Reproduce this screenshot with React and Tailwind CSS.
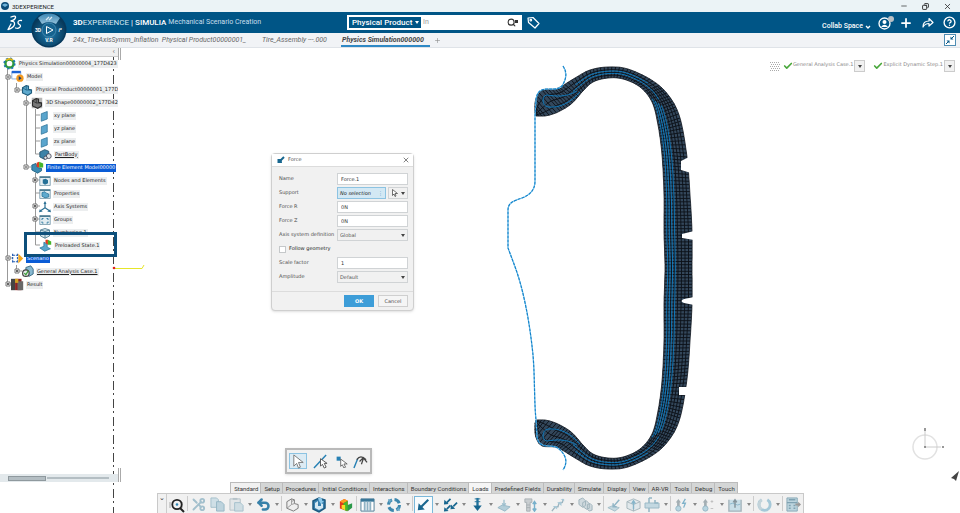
import React from "react";
import { Scissors, Undo2, Search, X, Minus, Copy, Plus, Check, CircleHelp } from "lucide-react";

/* ---------- tyre cross-section mesh ---------- */

const half = [
  [[535, 112], [536, 116]],
  [[535, 103], [545, 116]],
  [[537, 96], [553, 114]],
  [[542, 90], [560, 111]],
  [[555, 89], [570, 105]],
  [[562, 86], [577, 98]],
  [[575, 78], [583, 91]],
  [[590, 70], [593, 82]],
  [[608, 67], [608, 78]],
  [[628, 69], [623, 79]],
  [[653, 81], [640, 87]],
  [[669, 96], [652, 102]],
  [[680, 118], [658, 125]],
  [[687, 157], [662, 155]],
  [[690, 195], [664, 195]],
  [[692, 232], [664, 232]],
];
const mirror = ([x, y]) => [x, 536 - y];
const stations = [
  ...half,
  [[692, 268], [665, 268]],
  ...[...half].reverse().map(([o, i]) => [mirror(o), mirror(i)]),
];

function spline(a, b, c, d, t) {
  return [0, 1].map(
    (k) =>
      0.5 *
      (2 * b[k] +
        (c[k] - a[k]) * t +
        (2 * a[k] - 5 * b[k] + 4 * c[k] - d[k]) * t * t +
        (3 * b[k] - a[k] - 3 * c[k] + d[k]) * t * t * t)
  );
}

const ribs = [];
for (let s = 0; s < stations.length - 1; s++) {
  const at = (n, side) => stations[Math.max(0, Math.min(stations.length - 1, n))][side];
  const [o1, i1] = stations[s];
  const [o2, i2] = stations[s + 1];
  const len = (Math.hypot(o2[0] - o1[0], o2[1] - o1[1]) + Math.hypot(i2[0] - i1[0], i2[1] - i1[1])) / 2;
  const steps = Math.max(2, Math.round(len / 3.4));
  for (let n = 0; n < steps; n++) {
    const t = n / steps;
    ribs.push([
      spline(at(s - 1, 0), at(s, 0), at(s + 1, 0), at(s + 2, 0), t),
      spline(at(s - 1, 1), at(s, 1), at(s + 1, 1), at(s + 2, 1), t),
    ]);
  }
}
ribs.push(stations[stations.length - 1]);

const pt = (p) => p[0].toFixed(1) + " " + p[1].toFixed(1);
const layer = (f, from = 0, to = ribs.length) =>
  "M" +
  ribs
    .slice(from, to)
    .map(([o, i]) => pt([i[0] + (o[0] - i[0]) * f, i[1] + (o[1] - i[1]) * f]))
    .join("L");
const body =
  "M" + ribs.map((r) => pt(r[0])).join("L") + "L" + [...ribs].reverse().map((r) => pt(r[1])).join("L") + "Z";
const cross = ribs.map(([o, i]) => "M" + pt(o) + "L" + pt(i)).join("");
const firstAt = (x) => ribs.findIndex(([, i]) => i[0] > x);
const beltFrom = firstAt(650);
const wallFrom = firstAt(577);
const grid =
  [0.24, 0.48, 0.74].map((f) => layer(f)).join("") +
  [0.12, 0.36, 0.61, 0.87].map((f) => layer(f, beltFrom - 3, ribs.length - beltFrom + 3)).join("");
const belts = [0.1, 0.19, 0.28, 0.38]
  .map((f, n) => layer(f, beltFrom + n, ribs.length - beltFrom - n))
  .join("");
const plies = layer(0.4, wallFrom, beltFrom + 2) + layer(0.62, wallFrom + 2, beltFrom - 4);
const pliesLow =
  layer(0.4, ribs.length - beltFrom - 2, ribs.length - wallFrom) +
  layer(0.62, ribs.length - beltFrom + 4, ribs.length - wallFrom - 2);

const rim =
  "M563 66C567 72 567 78 562 86C558 90 553 89 548 89C540 89 537 92 536 100L535 116V181C535 190 530 195 522 198C513 201 508 203 508 210V248L514 264C524 290 530 325 533 355C535 378 534 400 536 420L537 437C538 443 541 446 548 446C555 446 558 447 562 452C567 458 567 464 563 470";

function Tyre() {
  return (
    <svg className="pointer-events-none absolute left-0 top-0" width="960" height="465" viewBox="0 48 960 465" fill="none">
      <path d="M113.500 57V513" stroke="#444" strokeDasharray="9 3 2 4" />
      <path d="M114 268.500H142L144 265" stroke="#e6e62a" />
      <circle cx="114" cy="268" r="1.300" fill="#d22" />
      <path d={body} fill="#33475b" stroke="#10171f" strokeWidth="0.8" />
      <path d={cross + grid} stroke="#0b1016" strokeWidth="0.9" />
      <g stroke="#0c7fc6" strokeWidth="0.9">
        <path d={belts} />
        <path d={plies + pliesLow} />
        <path d="M577 91C565 98 555 96 547 95C541 96 542 106 548 107C560 108 570 103 580 92" />
        <path d="M577 445C565 438 555 440 547 441C541 440 542 430 548 429C560 428 570 433 580 444" />
      </g>
      <path d="M689 157L681 161V170L691 173ZM694 231L682 234V238L694 240ZM694 297L684 299Q679 301 684 303L694 305ZM690 387H679V395H688Z" fill="#fff" />
      <path d={rim} stroke="#8fd0f2" strokeWidth="1.200" />
      <path d={rim} stroke="#1583ca" strokeWidth="1.200" strokeDasharray="3 1" />
      <g stroke="#e2e2e2">
        <circle cx="925" cy="447" r="12" strokeWidth="1.500" />
        <path d="M925 431V447H941" stroke="#ccc" />
        <path d="M925 428V431M942 447H944M924 447H926" stroke="#777" strokeWidth="1.500" />
      </g>
      <path d="M951 478L959 471L956 481L954 479Z" fill="#444" />
    </svg>
  );
}

/* ---------- small drawings ---------- */

const Svg = ({ children, s = 14 }) => (
  <svg width={s} height={s} viewBox="0 0 16 16" fill="none" className="shrink-0">
    {children}
  </svg>
);

function Caret({ className = "text-[#444]" }) {
  return (
    <svg width="4" height="3" viewBox="0 0 4 3" className={"pointer-events-none shrink-0 " + className} fill="currentColor">
      <path d="M0 0H4L2 3Z" />
    </svg>
  );
}

const cube = "M2 5L7 2L10 3V7L14 8V12L9 15L2 12Z";
const icons = {
  zoom: (
    <Svg s={16}>
      <path d="M1 5V11M13 5V11" stroke="#aaa" />
      <circle cx="8" cy="7.500" r="4.700" stroke="#222" strokeWidth="1.800" />
      <path d="M11 11L15 15" stroke="#222" strokeWidth="2" />
      <circle cx="8" cy="7.500" r="1.300" fill="#2f86b5" />
    </Svg>
  ),
  cut: <Scissors size={15} strokeWidth={3} className="rotate-180 text-[#a3c0cd]" />,
  copy: (
    <Svg s={15}>
      <path d="M1 1H7L9 3V11H1Z" fill="#cfdfe6" stroke="#a4c0cc" />
      <path d="M7 5H12L15 8V15H7Z" fill="#bdd3dd" stroke="#93b5c4" />
    </Svg>
  ),
  paste: (
    <Svg s={15}>
      <path d="M1 2H12V14H1Z" fill="#e2e6e8" stroke="#b6c3c9" />
      <path d="M4 1H9V3H4Z" fill="#b6c3c9" />
      <path d="M6 6H12L15 9V15H6Z" fill="#cfdde3" stroke="#a4c0cc" />
    </Svg>
  ),
  undo: <Undo2 size={15} strokeWidth={4} className="text-[#3881a9]" />,
  part: (
    <Svg s={15}>
      <path d={cube} fill="#eee" stroke="#777" />
      <path d="M7 2V8L2 12M7 8L10 7M10 3L7 5" stroke="#999" />
    </Svg>
  ),
  partBlue: (
    <Svg s={16}>
      <path d="M2 4L8 1L14 3V11L8 15L2 12Z" fill="#377fae" stroke="#1d5a80" strokeWidth="1.500" />
      <path d="M4 6L7 4V9H10V6L12 7V11L8 13L4 11Z" fill="#d5e8f2" />
      <path d="M7 1Q12 0 11 4L13 4L10 7L8 4Z" fill="#8cc9ea" />
    </Svg>
  ),
  result: (
    <Svg>
      <path d="M1 4L6 1L10 3V15L1 12Z" fill="#e23b1d" />
      <path d="M1 4L6 1L10 3L5 6Z" fill="#ff9d21" />
      <path d="M5 6L10 3V8L15 9L9 15L5 13Z" fill="#48b929" />
      <path d="M3 8L7 8V14L3 12Z" fill="#f4de26" />
      <path d="M10 8L15 6V11L10 15Z" fill="#2b9a4a" />
    </Svg>
  ),
  table: (
    <Svg s={15}>
      <path d="M1 2H15V15H1Z" fill="#fff" stroke="#4d7c96" />
      <path d="M1 2H15V5H1Z" fill="#3a7899" />
      <path d="M5 5V15M8 5V15M11 5V15" stroke="#8fb2c4" strokeWidth="2" />
    </Svg>
  ),
  update: (
    <Svg s={16}>
      <circle cx="8" cy="8" r="5.500" stroke="#3c87ae" strokeWidth="3" strokeDasharray="6 2.600" />
      <path d="M2 2L6 3L3 6ZM14 14L10 13L13 10Z" fill="#69a9c8" />
    </Svg>
  ),
  force: (
    <Svg s={14}>
      <path d="M14 2L6 10" stroke="#17668f" strokeWidth="2.500" />
      <path d="M2 14L3 6L10 13Z" fill="#17668f" />
    </Svg>
  ),
  forces: (
    <Svg s={15}>
      <path d="M8 2L4 6M15 6L11 10M8 9L4 13" stroke="#17668f" strokeWidth="1.800" />
      <path d="M1 8L1.500 3L6 7.500ZM8 13L8.500 8L13 12.500ZM1 15.500L1.500 11L6 15Z" fill="#17668f" />
    </Svg>
  ),
  down: (
    <Svg s={15}>
      <path d="M8 1V10" stroke="#22739c" strokeWidth="2.500" />
      <path d="M3.500 9H12.500L8 15Z" fill="#17668f" />
      <path d="M5 2H11M5 5H11" stroke="#22739c" />
    </Svg>
  ),
  pressure: (
    <Svg>
      <path d="M1 11L6 8L15 10L9 15Z" fill="#b3ced9" stroke="#93b5c4" />
      <path d="M8 2V8M6 6L8 9L10 6" stroke="#9dbfce" strokeWidth="1.500" />
    </Svg>
  ),
  bolt: (
    <Svg>
      <path d="M1 1H9V5H7V15H3V5H1Z" fill="#c9ced1" stroke="#a5adb1" />
      <path d="M3 8H7M3 11H7" stroke="#a5adb1" />
      <path d="M12 5V13M10 7L12 4L14 7M10 12L12 15L14 12" stroke="#77b0cb" strokeWidth="1.600" />
    </Svg>
  ),
  steps: (
    <Svg>
      <path d="M1 15L5 10H8L9 6L13 5L14 1" stroke="#9eb4be" strokeWidth="1.500" />
      <path d="M2 9L7 9V13ZM7 5L12 4V9ZM11 1H15V4Z" fill="#a9c9d7" />
    </Svg>
  ),
  coils: (
    <Svg s={15}>
      <path d="M1 3L5 1L8 4V9L5 11L1 8ZM5 6L9 4L12 7V12L9 13L5 10ZM10 8L13 7L15 9V14L12 15L10 13Z" fill="#cfd9de" stroke="#9fb3bc" />
    </Svg>
  ),
  slide: (
    <Svg>
      <path d="M1 11L6 9L14 11L9 15Z" fill="#c4d8e0" stroke="#a0bbc7" />
      <path d="M14 2L8 9M7 6V10L11 10" stroke="#8fb4c5" strokeWidth="1.700" />
    </Svg>
  ),
  block: (
    <Svg s={15}>
      <path d="M1 5L8 2L15 5V12L8 15L1 12ZM1 5L8 8L15 5M8 8V15" fill="#e1e8eb" stroke="#a6b6bd" />
      <path d="M8 13V5M6 7L8 4L10 7" stroke="#87b5ca" strokeWidth="1.500" />
    </Svg>
  ),
  press: (
    <Svg s={16}>
      <path d="M1 6H15V11H1Z" fill="#c3d8e1" stroke="#9cbac7" />
      <path d="M5 1V6M5 11V15M11 3V6H14M5 1H8" stroke="#93b5c4" strokeWidth="1.500" />
    </Svg>
  ),
  thermo: (
    <Svg>
      <path d="M3.500 10V5H2L5 1L8 5H6.500V10Z" fill="#a3aeb3" />
      <circle cx="5" cy="12" r="3" fill="#b8d5e1" stroke="#93b5c4" />
      <path d="M13 1L10 6H13L11 11" stroke="#7fb2ca" strokeWidth="1.500" />
    </Svg>
  ),
  thermo2: (
    <Svg>
      <path d="M3.500 10V5H2L5 1L8 5H6.500V10Z" fill="#a3aeb3" />
      <circle cx="5" cy="12" r="3" fill="#b8d5e1" stroke="#93b5c4" />
      <path d="M11 4H14M12.500 2.500V5.500M11 12H14" stroke="#bbb" />
    </Svg>
  ),
  bath: (
    <Svg>
      <path d="M1 2V15H15V2" fill="#c9dfe8" stroke="#a4b3ba" strokeWidth="1.500" />
      <path d="M2 7Q5 5 8 7T14 7" stroke="#86b4c9" />
      <path d="M8 11V3M6 5L8 2L10 5" stroke="#85959c" strokeWidth="1.700" />
    </Svg>
  ),
  ring: (
    <Svg s={15}>
      <path d="M11 3A6 6 0 1 1 5 3" stroke="#a5c8d8" strokeWidth="3" />
      <path d="M5 3A6 6 0 0 0 5 13" stroke="#c3d3da" strokeWidth="3" />
    </Svg>
  ),
  sheet: (
    <Svg s={15}>
      <path d="M1 1H12V15H1Z" fill="#bcd4de" stroke="#87a9b8" />
      <path d="M3 3H10M1 6H12M3 9H5M8 9H10M3 12H5M8 12H10" stroke="#7fa2b2" strokeWidth="1.500" />
      <path d="M10 7H13V5L16 8L13 11V9H10Z" fill="#999" />
    </Svg>
  ),
};

const toolbar = [
  ["zoom", "Fit all"], "|", ["cut", "Cut"], ["copy", "Copy"], ["paste", "Paste", 1], ["undo", "Undo", 1], "|",
  ["part", "Part", 1], ["partBlue", "Solid", 1], ["result", "Results"], "|", ["table", "Table", 1],
  ["update", "Update", 1], "|", ["force", "Force", 1], ["forces", "Distributed force", 1], ["down", "Gravity", 1],
  ["pressure", "Pressure", 1], ["bolt", "Bolt", 1], ["steps", "Displacement", 1], ["coils", "Rotation", 1], "|",
  ["slide", "Slide"], ["block", "Block"], ["press", "Press", 1], "|", ["thermo", "Heat flux", 1],
  ["thermo2", "Temperature", 1], ["bath", "Fluid", 1], "|", ["ring", "Cycle", 1], "|", ["sheet", "Report"],
];

const sections = [
  "Standard", "Setup", "Procedures", "Initial Conditions", "Interactions", "Boundary Conditions", "Loads",
  "Predefined Fields", "Durability", "Simulate", "Display", "View", "AR-VR", "Tools", "Debug", "Touch",
];

/* ---------- tree ---------- */

const plane = (
  <Svg s={12}>
    <path d="M3 5L11 2V12L3 15Z" fill="#5aa5cd" stroke="#2c7197" />
  </Svg>
);
const blueCube = (
  <Svg s={12}>
    <path d={cube} fill="#5ea9cd" stroke="#1d5c7d" strokeWidth="1.500" />
    <path d="M7 2V8L2 5M7 8L14 8" stroke="#1d5c7d" />
  </Svg>
);
const boxed = (inner) => (
  <Svg s={12}>
    <path d="M1 2H15V14H1Z" fill="#e3edf1" stroke="#6d93a5" />
    <path d="M1 2H15V4H1Z" fill="#4c7c92" />
    {inner}
  </Svg>
);
const glyphs = {
  gear: (
    <Svg s={13}>
      <circle cx="8" cy="8" r="5" stroke="#2f9a3b" strokeWidth="3" />
      <circle cx="8" cy="8" r="6.500" stroke="#1b75b5" strokeWidth="2" strokeDasharray="2.500 2.600" />
      <path d="M4 4A6 6 0 0 1 12 4" stroke="#e5b81c" strokeWidth="2.500" />
      <circle cx="8" cy="8" r="2.200" fill="#fff" />
    </Svg>
  ),
  model: (
    <Svg s={13}>
      <path d="M1 2H12V11H1Z" fill="#fff" stroke="#7ba4d6" />
      <path d="M1 1H12V4H1Z" fill="#1b62d2" />
      <circle cx="11" cy="10" r="4.500" fill="#f39a1f" />
      <path d="M9.500 7.500L13 10L9.500 12.500Z" fill="#143a6e" />
    </Svg>
  ),
  product: blueCube,
  shape: (
    <Svg s={12}>
      <path d="M1 1H15V15H1Z" fill="#b5b5b5" />
      <path d={cube} fill="#777" stroke="#2c2c2c" strokeWidth="1.500" />
      <path d="M7 2V8L2 5M7 8L14 8" stroke="#2c2c2c" />
    </Svg>
  ),
  plane,
  body: (
    <Svg s={13}>
      <path d="M1 5L7 2L12 4V11L7 14L1 11Z" fill="#3d83a8" stroke="#1d4d68" />
      <circle cx="12" cy="10" r="3" fill="#dfe5e8" stroke="#445" />
      <circle cx="8" cy="12" r="2" fill="#dfe5e8" stroke="#445" />
    </Svg>
  ),
  fem: (
    <Svg s={13}>
      <path d="M1 5L6 3L8 8L13 9V12L8 15L1 11Z" fill="#3c8bb3" stroke="#1d5c7d" />
      <path d="M7 2L10 1V8L7 7Z" fill="#e23b1d" />
      <path d="M10 1L15 3V8L10 8Z" fill="#45b52a" />
    </Svg>
  ),
  nodes: boxed(<path d="M5 6L9 5L12 7V11L8 13L5 11Z" fill="#247097" />),
  props: boxed(<path d="M4 6L8 5L10 7L13 8V12L8 13L4 11Z" fill="#5ea9cd" stroke="#247097" />),
  axis: (
    <Svg s={12}>
      <path d="M8 9V2M8 9L2 13M8 9L14 13" stroke="#2b6f93" strokeWidth="1.600" />
      <path d="M6 4L8 0L10 4ZM1 11L0 15L5 14ZM15 11L16 15L11 14Z" fill="#2b6f93" />
    </Svg>
  ),
  groups: boxed(<path d="M4 6H6M10 6H12M4 12H6M10 12H12M4 6V8M12 6V8M4 10V12M12 10V12" stroke="#3d83a8" strokeWidth="1.500" />),
  number: (
    <Svg s={12}>
      <path d="M2 4L8 2L14 4V12L8 15L2 12Z" fill="#cfe0e8" stroke="#3c6d84" />
      <path d="M8 6V15M2 4L8 6L14 4" stroke="#3c6d84" />
    </Svg>
  ),
  preload: (
    <Svg s={13}>
      <path d="M1 11L6 9V4L10 6V10L14 12L7 15Z" fill="#59a6cc" stroke="#2f7ba1" />
      <path d="M8 1H11V7L8 5Z" fill="#e23b1d" />
      <path d="M11 1L15 3V7H11Z" fill="#45b52a" />
    </Svg>
  ),
  scenario: (
    <Svg s={13}>
      <path d="M2 2V14M8 2V14M2 4H8M2 12H8" stroke="#2b62b4" strokeWidth="1.500" strokeDasharray="3 1" />
      <path d="M9 2L15 8L9 14Z" fill="#f5a81f" />
    </Svg>
  ),
  gcase: (
    <Svg s={13}>
      <path d="M6 3L12 1L15 5V11L10 14L6 11Z" fill="#88b9d1" stroke="#275c78" />
      <circle cx="6" cy="10" r="4" fill="#e4e8ea" stroke="#444" strokeWidth="1.500" />
      <path d="M4 10L6 12L9 7" stroke="#3c9c36" strokeWidth="1.500" />
    </Svg>
  ),
  outcome: (
    <Svg s={13}>
      <path d="M0 1H5V15H0Z" fill="#444" />
      <path d="M5 1H13V15H5Z" fill="#8c2424" />
      <path d="M8 4H15V15H8Z" fill="#686868" />
      <path d="M5 1H9V6H5Z" fill="#d2a024" />
    </Svg>
  ),
};

const depth = ["pl-[3px]", "pl-[11px]", "pl-[21px]", "pl-[31px]", "pl-[39px]"];
const tree = [
  [0, "gear", "Physics Simulation00000004_177D423"],
  [1, "model", "Model"],
  [2, "product", "Physical Product00000001_177D"],
  [3, "shape", "3D Shape00000002_177D423"],
  [4, "plane", "xy plane"],
  [4, "plane", "yz plane"],
  [4, "plane", "zx plane"],
  [4, "body", "PartBody", "underline"],
  [3, "fem", "Finite Element Model00000", "selected"],
  [4, "nodes", "Nodes and Elements"],
  [4, "props", "Properties"],
  [4, "axis", "Axis Systems"],
  [4, "groups", "Groups"],
  [4, "number", "Numbering.1"],
  [4, "preload", "Preloaded State.1"],
  [1, "scenario", "Scenario", "selected"],
  [2, "gcase", "General Analysis Case.1", "underline"],
  [1, "outcome", "Result"],
];
const labelLook = {
  underline: "bg-[#eceeef] underline",
  selected: "bg-[#0a5cd6] text-white",
};

function Toggle({ x, y, open }) {
  return (
    <g>
      <path d={`M${x - 2} ${y - 2}h4v4h-4z`} fill="#fff" stroke="#777" />
      <path d={`M${x - 1} ${y}h2` + (open ? "" : `M${x} ${y - 1}v2`)} stroke="#333" />
    </g>
  );
}

function TreePanel() {
  return (
    <aside className="relative flex h-[434px] w-[121px] flex-col">
      <div className="flex h-[9px] w-[119px] items-center justify-end border-b border-[#ccc] bg-[#f0f0f0] pr-1">
        <button aria-label="Collapse tree" className="text-[8px] leading-none text-[#777]">‹</button>
      </div>
      <div className="relative w-[118px] flex-1 overflow-hidden font-['DejaVu_Sans','Noto_Sans',sans-serif] [text-rendering:geometricPrecision]">
        <svg className="absolute left-0 top-0" width="60" height="236" viewBox="0 0 60 236" fill="none">
          <path
            d="M7.500 12V227M7.500 20H12M7.500 201H12M7.500 227H12M16.500 26V33H22M16.500 208V214H22M26.500 39V110M26.500 46H31M26.500 110H31M35.500 52V84M35.500 58H40M35.500 71H40M35.500 84H40M35.500 97H40M35.500 84V97M35.500 116V188M35.500 123H40M35.500 136H40M35.500 149H40M35.500 162H40M35.500 175H40M35.500 188H40"
            stroke="#999"
          />
          <Toggle x={8} y={20} open />
          <Toggle x={17} y={33} open />
          <Toggle x={26} y={46} open />
          <Toggle x={26} y={110} open />
          <Toggle x={35} y={123} />
          <Toggle x={35} y={149} />
          <Toggle x={35} y={162} />
          <Toggle x={8} y={201} open />
          <Toggle x={17} y={214} />
          <Toggle x={8} y={227} />
        </svg>
        <ul className="relative">
          {tree.map(([d, icon, label, look]) => (
            <li key={label} className={"flex h-[13px] items-center gap-0.5 whitespace-nowrap " + depth[d]}>
              {glyphs[icon]}
              <span className={"px-px text-[5px] leading-[8px] " + (labelLook[look] || "bg-[#eceeef]")}>{label}</span>
            </li>
          ))}
        </ul>
        <div className="absolute left-6 top-[175px] h-[25px] w-[93px] border-3 border-[#0d4f7b]" />
      </div>
      <div className="absolute right-0 top-0 h-3 w-[3px] border-x border-[#aaa]" />
      <div className="flex h-2 w-[118px] items-center bg-[#e3e9ec] pl-2">
        <div className="h-[5px] w-[38px] border border-[#8f999e] bg-[#b4bec3]" />
        <div className="ml-px h-0.5 w-[62px] bg-[#b4bec3]" />
      </div>
      <div className="absolute bottom-0 right-0 h-[14px] w-[3px] border-x border-[#aaa]" />
    </aside>
  );
}

/* ---------- dialog ---------- */

const field = "h-3 w-full border border-[#d0d3d5] bg-white pl-[3px] text-[5px] leading-[10px] text-[#333] outline-none";

function TextRow({ id, label, value }) {
  return (
    <>
      <label htmlFor={id}>{label}</label>
      <input id={id} defaultValue={value} className={field} />
    </>
  );
}

function SelectRow({ id, label, value }) {
  return (
    <>
      <label htmlFor={id} className="whitespace-nowrap">{label}</label>
      <div className="flex items-center">
        <select id={id} className="-mr-[7px] h-3 w-full appearance-none border border-[#d0d3d5] bg-[#f1f1f1] pl-0.5 text-[5px] leading-[10px] text-[#555]">
          <option>{value}</option>
        </select>
        <Caret />
      </div>
    </>
  );
}

function ForceDialog() {
  return (
    <section className="absolute left-[271px] top-[105px] w-[143px] rounded-sm border border-[#cfcfcf] bg-[#f1f1f1] font-['DejaVu_Sans','Noto_Sans',sans-serif] text-[5px] leading-[8px] text-[#4d4d4d] shadow-sm [text-rendering:geometricPrecision]">
      <header className="flex h-[13px] items-center gap-[3px] border-b border-[#dcdcdc] bg-white px-[5px]">
        <Svg s={8}>
          <path d="M14 2L6 10" stroke="#17668f" strokeWidth="4" />
          <path d="M1 6H9L10 14H1Z" fill="#17668f" />
        </Svg>
        <h2>Force</h2>
        <button aria-label="Close" className="ml-auto -mr-0.5 text-[#444]"><X size={8} /></button>
      </header>
      <div className="grid grid-cols-[58px_1fr] items-center gap-y-0.5 px-[5px] pb-2 pl-[7px] pt-[6px]">
        <TextRow id="name" label="Name" value="Force.1" />
        <span>Support</span>
        <div className="flex h-3 gap-0.5">
          <button className="flex w-[49px] items-center justify-between whitespace-nowrap border border-[#8cc3e2] bg-[#d3e8f4] px-0.5 italic text-[#222]">
            No selection <span className="not-italic text-[#2b7fae]">⋮</span>
          </button>
          <button aria-label="Pick mode" className="flex flex-1 items-center justify-between border border-[#d0d3d5] px-0.5">
            <Svg s={8}><path d="M3 1V13L6 10L8 15L10 14L8 9H13Z" fill="#fff" stroke="#444" strokeWidth="1.500" /></Svg>
            <Caret />
          </button>
        </div>
        <TextRow id="fr" label="Force R" value="0N" />
        <TextRow id="fz" label="Force Z" value="0N" />
        <SelectRow id="axis" label="Axis system definition" value="Global" />
        <div className="col-span-2 flex h-3 items-center gap-[3px] text-[#222]">
          <input id="follow" type="checkbox" className="size-[7px] appearance-none border border-[#c5c8ca] bg-white" />
          <label htmlFor="follow">Follow geometry</label>
        </div>
        <TextRow id="scale" label="Scale factor" value="1" />
        <SelectRow id="amp" label="Amplitude" value="Default" />
      </div>
      <footer className="flex justify-end gap-1 border-t border-[#dcdcdc] px-[5px] py-[3px]">
        <button className="h-3 w-[30px] bg-[#3d9dd8] font-bold text-white">OK</button>
        <button className="h-3 w-[30px] border border-[#cfcfcf] bg-[#f5f5f5]">Cancel</button>
      </footer>
    </section>
  );
}

function PickBar() {
  const arrow = "M3 1V13L6 10L8 15L10 14L8 9H13Z";
  return (
    <div className="absolute left-[285px] top-[400px] flex h-[26px] w-[87px] items-center gap-0.5 border-2 border-[#b9b9b9] bg-[#f1f1f1] px-0.5 shadow-sm">
      <button aria-label="Select" className="grid h-4 w-[18px] place-items-center border border-[#8cc3e2] bg-[#dcebf4]">
        <Svg s={15}><path d={arrow} fill="#fff" stroke="#777" /></Svg>
      </button>
      <button aria-label="Select edge" className="ml-0.5 grid h-4 w-[18px] place-items-center">
        <Svg s={15}><path d="M1 15L14 1" stroke="#2680b4" strokeWidth="1.500" /><path d="M8 5V13L10 11L12 15L14 14L12 10H15Z" fill="#fff" stroke="#555" /></Svg>
      </button>
      <button aria-label="Select node" className="ml-px grid h-4 w-[18px] place-items-center">
        <Svg s={13}><path d="M2 2H7V7H2Z" fill="#2680b4" /><path d="M7 5V14L9 12L11 16L13 15L11 11H15Z" fill="#fff" stroke="#555" /></Svg>
      </button>
      <button aria-label="Select path" className="grid h-4 w-[16px] place-items-center">
        <Svg s={15}><path d="M1 15L5 5" stroke="#2680b4" strokeWidth="1.500" /><path d="M4 6Q8 0 14 6M7 8L11 4L15 9M11 5L9 11" stroke="#444" strokeWidth="1.300" /></Svg>
      </button>
    </div>
  );
}

/* ---------- status and action bars ---------- */

function Status({ label }) {
  return (
    <div className="flex items-center">
      <Check size={10} strokeWidth={4} className="text-[#4aa83c]" />
      <span>{label}</span>
      <button aria-label={label + " options"} className="ml-px grid h-3 w-[11px] place-items-center border border-[#ccc] bg-[#f1f1f1]">
        <Caret />
      </button>
    </div>
  );
}

function ActionBar() {
  return (
    <div className="absolute inset-x-0 bottom-0 flex flex-col items-center text-[6px] text-[#333]">
      <nav className="ml-2 flex h-[11px] border border-b-0 border-[#bbb] bg-[#d4d6d6]">
        {sections.map((s) => (
          <button
            key={s}
            className={
              "whitespace-nowrap border-r border-[#bbb] pl-[3px] pr-0.5 last:border-r-0 " +
              (s === "Standard" ? "bg-[#f1f1f1]" : s === "Loads" ? "bg-[#f5f5f5]" : "")
            }
          >
            {s}
          </button>
        ))}
      </nav>
      <div className="flex h-5 w-[647px] border border-b-0 border-[#c9c9c9] bg-[#f1f1f1]">
        <button aria-label="Collapse bar" className="mr-px flex w-[9px] justify-center border-r border-[#ccc] text-[7px] leading-[8px]">⌄</button>
        {toolbar.map((t, n) =>
          t === "|" ? (
            <div key={n} className="my-0.5 w-0.5 border-l border-[#ccc]" />
          ) : (
            <div key={n} className="flex items-center pt-0.5">
              <button
                aria-label={t[1]}
                className={"grid h-[18px] w-[19px] place-items-center " + (t[0] === "force" ? "border border-[#7ab8da] bg-[#f7fbfd]" : "")}
              >
                {icons[t[0]]}
              </button>
              {t[2] && (
                <button aria-label={t[1] + " menu"} className="grid h-[18px] w-2 place-items-center">
                  <Caret className="text-[#888]" />
                </button>
              )}
            </div>
          )
        )}
      </div>
    </div>
  );
}

/* ---------- header ---------- */

function Compass() {
  return (
    <svg width="36" height="36" viewBox="0 0 36 36" className="relative z-10 shrink-0">
      <defs>
        <radialGradient id="ball" cx="50%" cy="60%" r="55%">
          <stop offset="0" stopColor="#4b95bd" />
          <stop offset="0.400" stopColor="#14608c" />
          <stop offset="1" stopColor="#07395a" />
        </radialGradient>
        <linearGradient id="shine" x1="0" y1="0" x2="0" y2="1">
          <stop offset="0" stopColor="#3a86b4" />
          <stop offset="1" stopColor="#94c1da" />
        </linearGradient>
      </defs>
      <circle cx="18" cy="18" r="17.500" fill="#06395c" />
      <circle cx="18" cy="18" r="16" fill="url(#ball)" />
      <path d="M7 6A16 16 0 0 1 29 6L25 12Q18 8 11 12Z" fill="url(#shine)" />
      <circle cx="18" cy="18" r="7" fill="#16638f" stroke="#3f87b0" />
      <path d="M15.500 14.500L22 18L15.500 21.500Z" fill="none" stroke="#fff" />
      <g fill="#fff" fontFamily="Roboto, sans-serif" fontSize="5" fontWeight="700" textAnchor="middle">
        <text x="7" y="20">3D</text>
        <text x="18" y="30">V.R</text>
        <text x="29" y="20" fontStyle="italic">i²</text>
      </g>
      <path d="M15 8L18 5M18 8L21 5" stroke="#dbeaf3" strokeWidth="1.200" />
    </svg>
  );
}

function Header() {
  return (
    <>
      <div className="flex h-3 items-center bg-[#ebf3f6] text-[7px] text-[#222]">
        <svg width="8" height="8" viewBox="0 0 8 8" className="mx-px"><circle cx="4" cy="4" r="4" fill="#0c4c78" /><path d="M1 3Q4 0 7 3L4 5Z" fill="#6fb2d8" /></svg>
        <span className="ml-0.5 text-[6px]">3DEXPERIENCE</span>
        <div className="ml-auto flex items-center gap-[14px] pr-2">
          <button aria-label="Minimize"><Minus size={8} /></button>
          <button aria-label="Restore"><Copy size={7} strokeWidth={3} className="-scale-x-100" /></button>
          <button aria-label="Close window"><X size={9} /></button>
        </div>
      </div>
      <header className="flex h-[21px] items-start bg-[#005586] text-white">
        <div className="flex w-[347px] shrink-0 items-start">
          <svg width="16" height="16" viewBox="0 0 16 16" className="ml-[7px] mr-2 mt-[3px] shrink-0" fill="none" stroke="#fff" strokeWidth="1.300" strokeLinecap="round" strokeLinejoin="round">
            <path d="M4 2Q9 0 8.500 2.500Q8 5 4 6Q8 6 7.500 9.500Q6.500 13 1 14.500L4 9" />
            <path d="M14.500 5.500Q11 5 11 7.500Q11 9 12.500 9.500Q14.500 11 12.500 12.500Q11 14 8.500 13" />
          </svg>
          <Compass />
          <h1 className="ml-1.5 flex h-[21px] items-center gap-0.5 whitespace-nowrap text-[8px]">
            <span><b>3D</b><span className="text-[#dbe9f1]">EXPERIENCE</span></span>
            <span>|</span>
            <span className="font-medium">SIMULIA</span>
            <span className="text-[7px] text-[#c9dfec]">Mechanical Scenario Creation</span>
          </h1>
        </div>
        <div className="mt-[3px] flex h-[15px] w-[175px] items-center bg-white pl-0.5 pr-1">
          <div className="flex h-[11px] items-center bg-[#005586] pr-0.5">
            <select aria-label="Search type" className="h-[11px] w-[66px] appearance-none pl-[3px] text-[8px] font-medium leading-[11px] text-white">
              <option>Physical Product</option>
            </select>
            <Caret className="text-white" />
          </div>
          <input aria-label="Search" placeholder="In" className="min-w-0 flex-1 pl-0.5 text-[7px] text-[#333] outline-none placeholder:text-[#999]" />
          <Search size={9} strokeWidth={3} className="text-[#333]" />
          <span className="-ml-px mb-0.5 size-[3px] bg-[#333]" />
        </div>
        <button aria-label="Tags" className="ml-[5px] mt-1">
          <svg width="13" height="13" viewBox="0 0 13 13" fill="none" stroke="#fff" strokeWidth="1.200" strokeLinejoin="round">
            <path d="M1 2L6 1.500L12 7.500L8 12L1.500 6.500Z" />
            <circle cx="3.800" cy="4.200" r="0.800" />
          </svg>
        </button>
        <div className="ml-auto flex h-[21px] items-center gap-[9px] pr-1">
          <button className="flex items-center gap-0.5 whitespace-nowrap pt-2 text-[7px] font-medium">
            Collab Space
            <svg width="6" height="4" viewBox="0 0 6 4" fill="none" stroke="#fff" strokeWidth="1.300"><path d="M1 1L3 3L5 1" /></svg>
          </button>
          <button aria-label="Profile" className="-ml-0.5">
            <svg width="16" height="14" viewBox="0 0 16 14" fill="none">
              <circle cx="6.500" cy="7.500" r="5.500" stroke="#fff" strokeWidth="1.300" />
              <circle cx="6.500" cy="6" r="2" fill="#fff" />
              <path d="M3 11Q6.500 6.500 10 11Z" fill="#fff" />
              <circle cx="13" cy="3" r="3" fill="#b9c0c5" />
            </svg>
          </button>
          <button aria-label="Add" className="-ml-1"><Plus size={14} strokeWidth={3} /></button>
          <button aria-label="Share">
            <svg width="12" height="12" viewBox="0 0 12 12" fill="none" stroke="#fff" strokeWidth="1.200" strokeLinejoin="round"><path d="M1 10Q1 4 7 4V1.500L11 5.500L7 9V6.500Q3 6.500 1 10Z" /></svg>
          </button>
          <button aria-label="Help"><CircleHelp size={13} strokeWidth={2.5} /></button>
        </div>
      </header>
      <nav className="flex h-[15px] items-center border-b border-[#dfe3e8] bg-[#f1f3f6] pl-[73px] pr-1 text-[7px] italic text-[#666]">
        <button className="w-[189px] whitespace-nowrap text-left">24x_TireAxisSymm_Inflation&nbsp; Physical Product00000001_</button>
        <button className="w-[79px] whitespace-nowrap text-left">Tire_Assembly ---.000</button>
        <button className="h-full w-[89px] whitespace-nowrap border-b-2 border-[#2f89c5] px-px pt-0.5 text-left font-bold text-[#444]">Physics Simulation000000</button>
        <button aria-label="New tab" className="ml-1"><Plus size={7} strokeWidth={2} className="text-[#888]" /></button>
        <button aria-label="Exit full view" className="ml-auto grid size-3 place-items-center border border-[#4f8db3] bg-white">
          <svg width="8" height="8" viewBox="0 0 8 8" stroke="#005586" fill="#005586"><path d="M0 8L3 5M8 0L5 3" /><path d="M0.500 4.500H3.500V7.500ZM4.500 0.500V3.500H7.500Z" stroke="none" /></svg>
        </button>
      </nav>
    </>
  );
}

export default function App() {
  return (
    <div className="flex h-screen flex-col overflow-hidden bg-white font-['Roboto','Noto_Sans',sans-serif] text-[#222]">
      <Header />
      <main className="relative flex-1">
        <Tyre />
        <TreePanel />
        <div className="absolute right-[5px] top-3 flex items-center gap-2 font-['DejaVu_Sans','Noto_Sans',sans-serif] text-[5px] text-[#888] [text-rendering:geometricPrecision]">
          <div className="flex items-center gap-[3px]">
            <svg width="10" height="10" viewBox="0 0 10 10" stroke="#aaa"><path d="M0 1.500H10M1 3.500H10M0 5.500H10M1 7.500H10M0 9.500H10" strokeDasharray="1 1" /></svg>
            <Status label="General Analysis Case.1" />
          </div>
          <Status label="Explicit Dynamic Step.1" />
        </div>
        <ForceDialog />
        <PickBar />
        <ActionBar />
      </main>
    </div>
  );
}
